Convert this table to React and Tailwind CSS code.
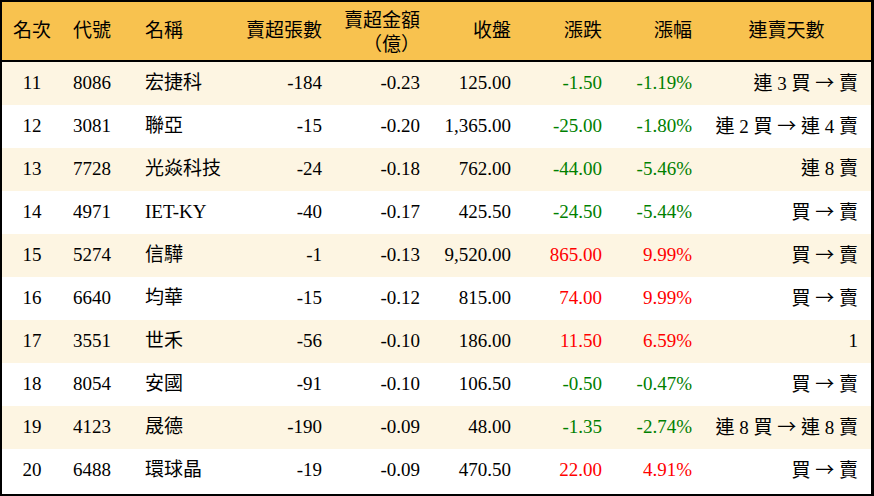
import React from 'react';

const rows = [
  { rank: 11, code: '8086', name: '宏捷科', lots: '-184', amt: '-0.23', close: '125.00', chg: '-1.50', pct: '-1.19%', streak: '連 3 買 → 賣' },
  { rank: 12, code: '3081', name: '聯亞', lots: '-15', amt: '-0.20', close: '1,365.00', chg: '-25.00', pct: '-1.80%', streak: '連 2 買 → 連 4 賣' },
  { rank: 13, code: '7728', name: '光焱科技', lots: '-24', amt: '-0.18', close: '762.00', chg: '-44.00', pct: '-5.46%', streak: '連 8 賣' },
  { rank: 14, code: '4971', name: 'IET-KY', lots: '-40', amt: '-0.17', close: '425.50', chg: '-24.50', pct: '-5.44%', streak: '買 → 賣' },
  { rank: 15, code: '5274', name: '信驊', lots: '-1', amt: '-0.13', close: '9,520.00', chg: '865.00', pct: '9.99%', streak: '買 → 賣' },
  { rank: 16, code: '6640', name: '均華', lots: '-15', amt: '-0.12', close: '815.00', chg: '74.00', pct: '9.99%', streak: '買 → 賣' },
  { rank: 17, code: '3551', name: '世禾', lots: '-56', amt: '-0.10', close: '186.00', chg: '11.50', pct: '6.59%', streak: '1' },
  { rank: 18, code: '8054', name: '安國', lots: '-91', amt: '-0.10', close: '106.50', chg: '-0.50', pct: '-0.47%', streak: '買 → 賣' },
  { rank: 19, code: '4123', name: '晟德', lots: '-190', amt: '-0.09', close: '48.00', chg: '-1.35', pct: '-2.74%', streak: '連 8 買 → 連 8 賣' },
  { rank: 20, code: '6488', name: '環球晶', lots: '-19', amt: '-0.09', close: '470.50', chg: '22.00', pct: '4.91%', streak: '買 → 賣' },
];

const cols = 'grid grid-cols-[60px_73px_95px_100px_100px_90px_92px_90px_169px]';

// arrow in the CJK face so it gets the full-width glyph
function Streak({ text }) {
  const parts = text.split('→');
  return (
    <>
      {parts.map((p, i) => (
        <React.Fragment key={i}>
          {i > 0 && <span className="font-['Noto_Sans_CJK_TC',sans-serif]">→</span>}
          {p}
        </React.Fragment>
      ))}
    </>
  );
}

export default function App() {
  return (
    <div className="w-[874px] h-[496px] bg-white border-t-2 border-l-2 border-r-[3px] border-b-2 border-black font-['Liberation_Serif','Noto_Sans_CJK_TC',serif] text-[19px] text-black">
      {/* header */}
      <div className={`${cols} h-[60px] bg-[#f8c24f] border-b-2 border-black items-center`}>
        <div className="text-center">名次</div>
        <div className="pl-[11px]">代號</div>
        <div className="pl-[10px]">名稱</div>
        <div className="text-right pr-[8px]">賣超張數</div>
        <div className="flex flex-col items-end gap-[1px] pr-[10px] leading-[21px]">
          <div>賣超金額</div>
          <div className="font-['Noto_Sans_CJK_TC',sans-serif]">（億）</div>
        </div>
        <div className="text-right pr-[9px]">收盤</div>
        <div className="text-right pr-[10px]">漲跌</div>
        <div className="text-right pr-[10px]">漲幅</div>
        <div className="text-center">連賣天數</div>
      </div>

      {/* rows */}
      {rows.map((r, i) => {
        const up = !r.chg.startsWith('-');
        const color = up ? 'text-[#ff0000]' : 'text-[#008000]';
        return (
          <div key={r.rank} className={`${cols} h-[43px] items-center ${i % 2 === 0 ? 'bg-[#fdf5e2]' : 'bg-white'}`}>
            <div className="text-center">{r.rank}</div>
            <div className="pl-[11px]">{r.code}</div>
            <div className="pl-[10px]">{r.name}</div>
            <div className="text-right pr-[8px]">{r.lots}</div>
            <div className="text-right pr-[10px]">{r.amt}</div>
            <div className="text-right pr-[9px]">{r.close}</div>
            <div className={`text-right pr-[10px] ${color}`}>{r.chg}</div>
            <div className={`text-right pr-[10px] ${color}`}>{r.pct}</div>
            <div className="text-right pr-[13px] whitespace-pre">
              <Streak text={r.streak} />
            </div>
          </div>
        );
      })}
    </div>
  );
}
